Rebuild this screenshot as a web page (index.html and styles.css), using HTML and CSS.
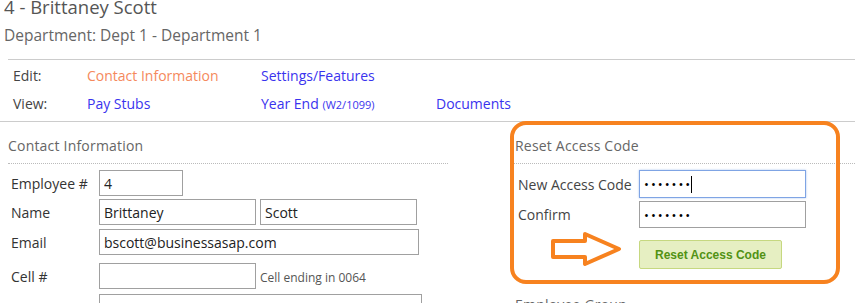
FILE: index.html
```html
<!DOCTYPE html>
<html lang="en">
<head>
    <meta charset="UTF-8">
    <title>Employee - Brittaney Scott</title>
    <link rel="stylesheet" href="styles.css">
</head>
<body>
    <div class="page">
        <h1 class="emp-name">4 - Brittaney Scott</h1>
        <div class="dept">Department: Dept 1 - Department 1</div>

        <div class="nav">
            <div class="nav-row">
                <span class="nav-label">Edit:</span>
                <a class="nav-link current" href="#">Contact Information</a>
                <a class="nav-link" href="#">Settings/Features</a>
            </div>
            <div class="nav-row">
                <span class="nav-label">View:</span>
                <a class="nav-link" href="#">Pay Stubs</a>
                <a class="nav-link" href="#">Year End <small>(W2/1099)</small></a>
                <a class="nav-link" href="#">Documents</a>
            </div>
        </div>

        <div class="sections">
            <div class="section contact">
                <h3 class="section-title">Contact Information</h3>
                <div class="form-row">
                    <label>Employee #</label>
                    <input type="text" class="in-short" value="4">
                </div>
                <div class="form-row">
                    <label>Name</label>
                    <input type="text" class="in-half" value="Brittaney">
                    <input type="text" class="in-half" value="Scott">
                </div>
                <div class="form-row row-email">
                    <label>Email</label>
                    <input type="text" class="in-wide" value="bscott@businessasap.com">
                </div>
                <div class="form-row row-cell">
                    <label>Cell #</label>
                    <input type="text" class="in-half" value="">
                    <span class="hint">Cell ending in 0064</span>
                </div>
                <div class="form-row row-next">
                    <label></label>
                    <input type="text" class="in-full" value="">
                </div>
            </div>

            <div class="section access">
                <h3 class="section-title">Reset Access Code</h3>
                <div class="form-row">
                    <label>New Access Code</label>
                    <span class="field-wrap">
                        <input type="password" class="in-code focused" value="1234567">
                        <span class="caret"></span>
                    </span>
                </div>
                <div class="form-row">
                    <label>Confirm</label>
                    <input type="password" class="in-code" value="1234567">
                </div>
                <div class="form-row row-button">
                    <label></label>
                    <button class="btn-reset">Reset Access Code</button>
                </div>
                <h3 class="section-title next-title">Employee Group</h3>
            </div>
        </div>

        <!-- annotation drawn over the screenshot -->
        <div class="callout-box"></div>
        <svg class="callout-arrow" width="76" height="40" viewBox="0 0 76 40">
            <polygon points="4,10 36,10 36,3 70,18 36,33 36,26 4,26" fill="none" stroke="#f7821f" stroke-width="4" stroke-linejoin="round"/>
        </svg>
    </div>
</body>
</html>
```

FILE: styles.css
```css
body {
    font-family: 'Open Sans', sans-serif;
    margin: 0;
    padding: 0;
    background-color: white;
    color: #333;
    overflow: hidden;
}
.page {
    position: relative;
    display: flow-root;
    width: 855px;
}
.emp-name {
    font-size: 18.5px;
    font-weight: normal;
    line-height: 24px;
    color: #555;
    margin: -5px 0 0 4px;
}
.dept {
    font-size: 15.5px;
    line-height: 22px;
    color: #666;
    margin: 5px 0 0 4px;
}

/* edit / view links */
.nav {
    margin: 13px 0 0 8px;
    padding: 2px 0 3px 5px;
    border-top: 1px solid #ccc;
}
.nav-row {
    display: grid;
    grid-template-columns: 74px 174px 175px auto;
    font-size: 14px;
    line-height: 27px;
}
.nav-row + .nav-row {
    margin-top: 1px;
}
.nav-label {
    color: #444;
}
.nav-link {
    color: #3a33ee;
    text-decoration: none;
}
.nav-link small {
    font-size: 11px;
}
.nav-link.current {
    color: #f5895c;
}

/* two columns */
.sections {
    display: flex;
    border-top: 1px solid #ccc;
}
.section-title {
    font-size: 14px;
    font-weight: normal;
    letter-spacing: 0.2px;
    line-height: 20px;
    color: #666;
    margin: 0;
    padding: 14px 0 7px 0;
    border-bottom: 1px dotted #bbb;
}
.contact {
    width: 440px;
    margin-left: 8px;
}
.access {
    flex: 1;
    margin-left: 64px;
}
.access .section-title {
    padding-left: 3px;
}
.form-row {
    display: flex;
    align-items: center;
    gap: 4px;
    margin-top: 3px;
}
.section-title + .form-row {
    margin-top: 6px;
}
.form-row label {
    box-sizing: border-box;
    width: 87px;
    font-size: 14px;
    color: #333;
    padding-left: 3px;
}
.row-email {
    margin-top: 4px;
}
.row-cell {
    margin-top: 8px;
}
.row-next {
    margin-top: 5px;
}
input {
    font-family: 'Open Sans', sans-serif;
    font-size: 14px;
    color: #222;
    height: 26px;
    box-sizing: border-box;
    border: 1px solid #a0a0a0;
    padding: 0 4px;
    margin: 0;
    outline: none;
}
.in-short { width: 84px; }
.in-half { width: 157px; }
.in-wide { width: 320px; }
.in-full { width: 323px; }
.hint {
    font-size: 12px;
    color: #555;
    padding-top: 3px;
}

.access .form-row label {
    width: 127px;
    padding-left: 6px;
    color: #444;
}
.access .form-row {
    gap: 0;
}
.in-code {
    width: 167px;
    height: 27px;
    font-size: 13px;
    letter-spacing: 2px;
    color: #000;
}
.in-code.focused {
    height: 28px;
    border-color: #7fa4e4;
    box-shadow: 0 0 2px #a8c4f0;
}
.field-wrap {
    position: relative;
    display: inline-block;
}
.caret {
    position: absolute;
    left: 52px;
    top: 6px;
    width: 1px;
    height: 17px;
    background-color: #000;
}
.row-button {
    margin-top: 12px;
}
.btn-reset {
    font-family: 'Liberation Sans', Arial, sans-serif;
    font-size: 12px;
    font-weight: bold;
    color: #529214;
    background-color: #e6efc2;
    border: 1px solid #c6d880;
    border-radius: 2px;
    width: 143px;
    height: 29px;
    padding: 0;
}
.next-title {
    margin-top: 12px;
    border-bottom: none;
}

/* orange callout */
.callout-box {
    position: absolute;
    left: 510px;
    top: 121px;
    width: 330px;
    height: 163px;
    box-sizing: border-box;
    border: 4px solid #f7821f;
    border-radius: 16px;
}
.callout-arrow {
    position: absolute;
    left: 549px;
    top: 231px;
}
```
